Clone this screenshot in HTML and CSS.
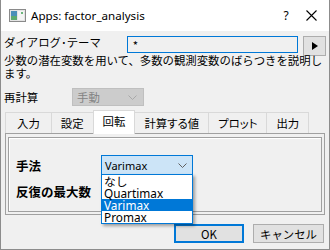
FILE: index.html
```html
<!DOCTYPE html>
<html lang="ja">
<head>
  <meta charset="UTF-8" />
  <title>Apps: factor_analysis</title>
  <link rel="stylesheet" href="styles.css">
</head>
<body>
  <div class="window">
    <div class="titlebar">
      <svg class="app-icon" width="17" height="13" viewBox="0 0 17 13">
        <rect x="0.5" y="0.5" width="16" height="12" fill="#e4e4e4" stroke="#8a8a8a"/>
        <rect x="2" y="2" width="6" height="9" fill="#4a8fb8"/>
        <rect x="2" y="7" width="6" height="4" fill="#5caa6e"/>
        <rect x="9" y="2" width="6" height="9" fill="#f4f4f4"/>
        <rect x="12" y="3" width="2" height="2" fill="#6bb67c"/>
      </svg>
      <span class="title">Apps: factor_analysis</span>
      <span class="title-btn help">?</span>
      <span class="title-btn close">
        <svg width="11" height="11" viewBox="0 0 11 11"><path d="M0.5 0.5 L10.5 10.5 M10.5 0.5 L0.5 10.5" stroke="#000" stroke-width="1.1"/></svg>
      </span>
    </div>

    <div class="content">
      <!-- dialog theme -->
      <div class="theme-row">
        <span class="label">ダイアログ･テーマ</span>
        <div class="theme-input">*</div>
        <div class="arrow-btn">
          <svg width="6" height="8" viewBox="0 0 6 8"><path d="M0 0 L6 4 L0 8 Z" fill="#000"/></svg>
        </div>
      </div>

      <p class="desc">少数の潜在変数を用いて、多数の観測変数のばらつきを説明し<br>ます。</p>

      <div class="recalc-row">
        <span class="label">再計算</span>
        <div class="combo disabled">
          <span>手動</span>
          <svg width="9" height="5" viewBox="0 0 9 5"><path d="M0.5 0.5 L4.5 4.5 L8.5 0.5" fill="none" stroke="#a8a8a8"/></svg>
        </div>
      </div>

      <!-- tabs -->
      <div class="tabs">
        <div class="tab">入力</div>
        <div class="tab">設定</div>
        <div class="tab active">回転</div>
        <div class="tab">計算する値</div>
        <div class="tab">プロット</div>
        <div class="tab">出力</div>
      </div>

      <div class="panel">
        <div class="group">
          <div class="field">
            <span class="field-label">手法</span>
            <div class="combo focused">
              <span>Varimax</span>
              <svg width="9" height="5" viewBox="0 0 9 5"><path d="M0.5 0.5 L4.5 4.5 L8.5 0.5" fill="none" stroke="#606060"/></svg>
            </div>
          </div>
          <div class="field">
            <span class="field-label">反復の最大数</span>
            <div class="num-input"></div>
          </div>

          <ul class="dropdown">
            <li>なし</li>
            <li>Quartimax</li>
            <li class="selected">Varimax</li>
            <li>Promax</li>
          </ul>
        </div>
      </div>

      <div class="buttons">
        <button class="btn default">OK</button>
        <button class="btn">キャンセル</button>
      </div>
    </div>
  </div>
</body>
</html>
```

FILE: styles.css
```css
body {
  margin: 0;
  font-family: "Noto Sans CJK JP", "Noto Sans", sans-serif;
  font-size: 11.4px;
  color: #000;
  background: #fff;
}
.window {
  width: 330px;
  height: 250px;
  box-sizing: border-box;
  border: 1px solid #8c8c8c;
  border-top: none;
  background: #f0f0f0;
  display: flex;
  flex-direction: column;
  overflow: hidden;
}
.titlebar {
  height: 31px;
  background: #fff;
  display: flex;
  align-items: center;
  padding-left: 8px;
  flex-shrink: 0;
}
.app-icon {
  margin-right: 5px;
}
.title {
  font-family: "Noto Sans", sans-serif;
  font-size: 11.6px;
  flex: 1;
}
.title-btn {
  display: flex;
  align-items: center;
  justify-content: center;
}
.help {
  font-family: "Noto Sans", sans-serif;
  font-size: 12px;
  width: 12px;
  margin-right: 14px;
}
.close {
  width: 11px;
  margin-right: 12px;
}
.content {
  padding: 0 3px;
  position: relative;
  flex: 1;
}
.label {
  line-height: 14px;
}
.theme-row {
  display: flex;
  align-items: flex-start;
  margin-top: 3px;
  height: 20px;
}
.theme-row .label {
  margin-top: 1px;
  width: 124px;
}
.theme-input {
  width: 166px;
  height: 15px;
  border: 1px solid #0078d7;
  background: #f0f0f0;
  margin-top: 2px;
  padding-left: 5px;
  line-height: 16px;
  box-sizing: content-box;
}
.arrow-btn {
  width: 21px;
  height: 18px;
  margin-left: 5px;
  margin-top: 2px;
  border: 1px solid #adadad;
  background: #e1e1e1;
  display: flex;
  align-items: center;
  justify-content: center;
}
.desc {
  margin: 0;
  line-height: 13px;
}
.recalc-row {
  display: flex;
  align-items: center;
  margin-top: 8px;
}
.recalc-row .label {
  width: 68px;
}
.combo {
  display: flex;
  align-items: center;
  justify-content: space-between;
  box-sizing: border-box;
}
.combo.disabled {
  width: 72px;
  height: 18px;
  background: #cccccc;
  border: 1px solid #bfbfbf;
  color: #838383;
  padding: 0 6px 0 4px;
}
.tabs {
  display: flex;
  align-items: flex-end;
  margin-top: 5px;
  margin-left: 1px;
  height: 22px;
  font-feature-settings: "palt";
}
.tab {
  height: 20px;
  line-height: 20px;
  padding: 0 9px;
  border: 1px solid #d9d9d9;
  border-bottom: none;
  border-left: none;
  background: #f0f0f0;
}
.tab:first-child {
  border-left: 1px solid #d9d9d9;
  padding: 0 11px;
}
.tab.active {
  height: 23px;
  line-height: 21px;
  background: #fff;
  border-left: 1px solid #d9d9d9;
  margin-left: -1px;
  margin-bottom: -1px;
  position: relative;
}
.panel {
  margin-left: 1px;
  width: 320px;
  height: 82px;
  box-sizing: border-box;
  border: 1px solid #a0a0a0;
  padding: 3px 2px 2px 2px;
}
.group {
  position: relative;
  height: 100%;
  box-sizing: border-box;
  border: 1px solid #a0a0a0;
  box-shadow: inset 1px 1px 0 #fff;
  padding: 17px 0 0 7px;
}
.field {
  display: flex;
  align-items: center;
  height: 20px;
  margin-bottom: 6px;
}
.field-label {
  font-weight: bold;
  font-size: 12.5px;
  width: 85px;
}
.combo.focused {
  width: 92px;
  height: 20px;
  background: #cce4f7;
  border: 1px solid #0078d7;
  padding: 0 5px 0 3px;
  font-family: "Noto Sans", sans-serif;
  font-size: 11px;
}
.num-input {
  width: 70px;
  height: 18px;
  margin-left: 6px;
  box-sizing: border-box;
  border: 1px solid #7a7a7a;
  background: #fff;
}
.dropdown {
  position: absolute;
  left: 92px;
  top: 36px;
  width: 92px;
  margin: 0;
  padding: 0;
  list-style: none;
  box-sizing: border-box;
  border: 1px solid #0078d7;
  background: #fff;
  box-shadow: 2px 2px 3px rgba(0, 0, 0, 0.35);
  font-family: "Noto Sans", "Noto Sans CJK JP", sans-serif;
  font-size: 11.8px;
}
.dropdown li {
  height: 12px;
  line-height: 12px;
  padding-left: 2px;
}
.dropdown li.selected {
  background: #0078d7;
  color: #fff;
}
.buttons {
  display: flex;
  justify-content: flex-end;
  gap: 9px;
  margin-top: 9px;
  padding-right: 2px;
}
.btn {
  font-family: "Noto Sans CJK JP", "Noto Sans", sans-serif;
  font-size: 11.4px;
  height: 19px;
  width: 71px;
  padding: 0;
  background: #e1e1e1;
  border: 1px solid #adadad;
  line-height: 16px;
}
.btn.default {
  width: 70px;
  border: 2px solid #0078d7;
}
```
